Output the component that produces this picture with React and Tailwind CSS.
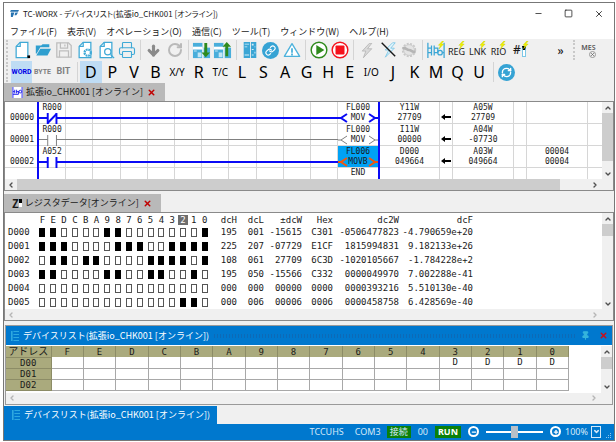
import { useState } from 'react'
import { ArrowDown, ChevronDown, ChevronLeft, ChevronRight, ChevronUp, Link, Minus, Pin, Plus, Printer, RefreshCw, RotateCw, Square, X } from 'lucide-react'
import clsx from 'clsx'

const MENUS = ['ファイル(F)', '表示(V)', 'オペレーション(O)', '通信(C)', 'ツール(T)', 'ウィンドウ(W)', 'ヘルプ(H)']

const DEVICES = ['D', 'P', 'V', 'B', 'X/Y', 'R', 'T/C', 'L', 'S', 'A', 'G', 'H', 'E', 'I/O', 'J', 'K', 'M', 'Q', 'U']

const RUNGS = [
  { no: '00000', contact: 'R000', kind: 'nc', on: true, fl: 'FL000', op: 'MOV', dst: ['Y11W', '27709'], src: ['A05W', '27709'] },
  { no: '00001', contact: 'R000', kind: 'no', on: false, fl: 'FL000', op: 'MOV', dst: ['I11W', '00000'], src: ['A04W', '-07730'] },
  { no: '00002', contact: 'A052', kind: 'no', on: true, selected: true, fl: 'FL006', op: 'MOVB', dst: ['D000', '049664'], src: ['A03W', '049664'], extra: ['00004', '00004'] },
]

const BITS = 'FEDCBA9876543210'.split('')

const REGISTERS = [
  { name: 'D000', bits: '1100001100000001', dcH: '195', dcL: '001', dcW: '-15615', hex: 'C301', dc2W: '-0506477823', dcF: '-4.790659e+20' },
  { name: 'D001', bits: '1110000111001111', dcH: '225', dcL: '207', dcW: '-07729', hex: 'E1CF', dc2W: '1815994831', dcF: '9.182133e+26' },
  { name: 'D002', bits: '0110110000111101', dcH: '108', dcL: '061', dcW: '27709', hex: '6C3D', dc2W: '-1020105667', dcF: '-1.784228e+2' },
  { name: 'D003', bits: '1100001100110010', dcH: '195', dcL: '050', dcW: '-15566', hex: 'C332', dc2W: '0000049970', dcF: '7.002288e-41' },
  { name: 'D004', bits: '0000000000000000', dcH: '000', dcL: '000', dcW: '00000', hex: '0000', dc2W: '0000393216', dcF: '5.510130e-40' },
  { name: 'D005', bits: '0000000000000110', dcH: '000', dcL: '006', dcW: '00006', hex: '0006', dc2W: '0000458758', dcF: '6.428569e-40' },
]

const DEVICE_ROWS = [
  { name: 'D00', used: ['3', '2', '1', '0'] },
  { name: 'D01', used: [] },
  { name: 'D02', used: [] },
]

function Bolt({ className, color = '#f2f200', edge = '#b5c400' }) {
  return (
    <svg viewBox="0 0 10 12" className={className}>
      <path d="M7 0 1 6.5h3L2 12l7-7.5H5.5L9 0z" fill={color} stroke={edge} strokeWidth=".5" />
    </svg>
  )
}

function PageIcon({ children }) {
  return (
    <svg viewBox="0 0 20 20" className="size-[18px]" fill="none" stroke="#3fa9d6" strokeWidth="1.4">
      <path d="M8 1.5h8.5v17h-13V6z" fill="#fff" />
      <path d="M8 1.5V6H3.5" />
      {children}
    </svg>
  )
}

function OpenIcon() {
  return (
    <svg viewBox="0 0 20 20" className="size-[18px]" fill="#2f9fcf">
      <path d="M2 5h6l1.5-1.5H17V7H7l-4 7H2z" />
      <path d="M7 8.5h12L15 16H2.5z" />
    </svg>
  )
}

function SaveIcon() {
  return (
    <svg viewBox="0 0 20 20" className="size-[18px]" fill="none" stroke="#bdbdbd" strokeWidth="1.4">
      <path d="M2 2h13l3 3v13H2z" />
      <path d="M6 2v6h8V2M5 18v-7h10v7M11 4v2" />
    </svg>
  )
}

function RackIcon({ up }) {
  return (
    <svg viewBox="0 0 20 20" className="size-[19px]">
      <path d="M1 2h10v16H1z" fill="#49aedb" />
      <path d="M1 6h10v3H1z" fill="#fff" />
      <path d="M2 10h3v1H2zM6 12h4v5H6z" fill="#c3e6f5" />
      <path d="M12 7h7v11h-7z" fill="#49aedb" />
      <path d="M11 7h1v11h-1z" fill="#fff" />
      <path
        d={up ? 'M13 16V6h-3l4.500-5L19 6h-3v10z' : 'M13 2v10h-3l4.500 5 4.500-5h-3V2z'}
        fill="#2f8a1c"
      />
    </svg>
  )
}

function UnitIcon() {
  return (
    <svg viewBox="0 0 20 20" className="size-[18px]">
      <path d="M3 1h7v18H3zM11 1h6v18h-6z" fill="#3ba6d5" />
      <path d="M4 3h5v1H4zM4 6h3v1H4zM4 15h5v1H4zM12 3h2v2h-2zM15 6h1v1h-1zM12 9h2v1h-2zM15 12h1v2h-1zM12 15h2v1h-2z" fill="#d8f0fa" />
    </svg>
  )
}

function WarnIcon() {
  return (
    <svg viewBox="0 0 20 20" className="size-[18px]" fill="none" stroke="#4db2dc" strokeWidth="1.5" strokeLinejoin="round">
      <path d="M10 3 18.500 17h-17z" fill="#fff" />
      <path d="M10 8v5M10 14v2" strokeWidth="2" />
    </svg>
  )
}

function PlayIcon() {
  return (
    <svg viewBox="0 0 20 20" className="size-[18px]">
      <circle cx="10" cy="10" r="8.7" fill="#fff" stroke="#2f8a1c" strokeWidth="1.6" />
      <path d="M7 4.500 16 10l-9 5.500z" fill="#2f8a1c" />
    </svg>
  )
}

function StopIcon() {
  return (
    <svg viewBox="0 0 20 20" className="size-[18px]">
      <circle cx="10" cy="10" r="8.7" fill="#fff" stroke="#f5121c" strokeWidth="1.6" />
      <rect x="5" y="5" width="10" height="10" rx="1" fill="#f5121c" />
    </svg>
  )
}

function BoltOffIcon() {
  return (
    <svg viewBox="0 0 20 20" className="size-[18px]">
      <path d="M15 2 7 10h4l-4 8 10-10h-4l5-6z" fill="#e4f5fc" stroke="#7cc7e6" />
      <path d="M3 2 18 17" stroke="#1a1a1a" strokeWidth="1.6" />
    </svg>
  )
}

function GearOffIcon() {
  return (
    <svg viewBox="0 0 20 20" className="size-[18px]" fill="none" stroke="#c8c8c8">
      <circle cx="10" cy="10" r="7" strokeWidth="2" strokeDasharray="2.200 1.500" />
      <circle cx="10" cy="10" r="6" fill="#e4e4e4" />
      <path d="M3 8c4-1 4 2 7 2s4 3 7 2" stroke="#b5b5b5" strokeWidth="3" />
    </svg>
  )
}

function LadderIcon() {
  return (
    <span className="relative block size-[18px]">
      <svg viewBox="0 0 20 20" className="size-[18px]" fill="none" stroke="#3ba6d5" strokeWidth="1.4">
        <path d="M1 2v17M19 2v17M1 8h4M5 5v6M8 5v6M8 8h4v5M1 13h4M5 11v5M8 11v5M8 13h4M17 13h2" />
        <circle cx="14.500" cy="13" r="2.500" />
      </svg>
      <Bolt className="absolute top-0 right-0 h-2 w-2" />
    </span>
  )
}

function TextIcon({ children }) {
  return (
    <span className="relative block pt-1 font-['Noto_Sans',sans-serif] text-[9px] leading-3">
      {children}
      <Bolt className="absolute -top-px right-0 h-2 w-[7px]" />
    </span>
  )
}

function ToolButton({ label, className, children }) {
  return (
    <button aria-label={label} className={clsx('flex h-[22px] w-[21px] shrink-0 items-center justify-center', className)}>
      {children}
    </button>
  )
}

const Sep = () => <span className="mx-[2px] h-5 w-px shrink-0 border-r border-[#d4d4d4] pr-px" />

const Grip = () => <span className="mx-[2px] h-5 w-[3px] shrink-0 border-l-2 border-dotted border-[#c9c9c9]" />

function DocTab({ icon, children }) {
  return (
    <div className="flex h-[18px] bg-[#f0f0f0]">
      <div className="flex items-center bg-[#b9b9b9] pr-[9px] pl-2 text-[9px] leading-4">
        {icon}
        <span className="whitespace-nowrap">{children}</span>
        <button aria-label="閉じる" className="ml-1 text-[#c00000]"><X size={9} strokeWidth={4} /></button>
      </div>
    </div>
  )
}

function VScroll({ thumb }) {
  return (
    <div className="flex w-[11px] shrink-0 flex-col items-center bg-[#f0f0f0] text-[#505050]">
      <button aria-label="上へ" className="flex h-[11px] items-center"><ChevronUp size={8} strokeWidth={4} /></button>
      <div className={clsx('w-full bg-[#cdcdcd]', thumb)} />
      <button aria-label="下へ" className="mt-auto flex h-[11px] items-center"><ChevronDown size={8} strokeWidth={4} /></button>
    </div>
  )
}

function HScroll({ thumb, faded }) {
  return (
    <div className={clsx('flex h-[11px] items-center bg-[#f0f0f0] pr-3', faded ? 'text-[#b5b5b5]' : 'text-[#505050]')}>
      <button aria-label="左へ" className="flex w-3 justify-center"><ChevronLeft size={8} strokeWidth={4} /></button>
      <div className="h-full flex-1">
        {thumb && <div className="h-full w-[95%] bg-[#cdcdcd]" />}
      </div>
      <button aria-label="右へ" className="flex w-3 justify-center"><ChevronRight size={8} strokeWidth={4} /></button>
    </div>
  )
}

function Contact({ rung }) {
  const color = rung.on ? '#0a0af5' : '#808080'
  return (
    <svg viewBox="0 0 27 11" preserveAspectRatio="none" className="h-[11px] w-full" fill="none" stroke={color} strokeWidth={rung.on ? 2 : 1}>
      <path d={rung.on ? 'M0 5h9M9 0v11M18 0v11M18 5h9' : 'M0 4.500h9M9 0v11M18 0v11M18 4.500h9'} />
      {rung.kind === 'nc' && <path d="M9 10 18 1" />}
    </svg>
  )
}

function Coil({ rung }) {
  const color = rung.selected ? '#f0560f' : rung.on ? '#0a0af5' : '#808080'
  return (
    <svg viewBox="0 0 40 10" className="absolute inset-x-0 top-[11px] h-[10px] w-full" fill="none" stroke={color} strokeWidth={rung.on ? 2 : 1}>
      <path d="M0 5h3M9 1 3 5l6 4M31 1l6 4-6 4M37 5h3" />
    </svg>
  )
}

function Operand({ value = [], className }) {
  return (
    <div className={clsx('shrink-0 border-r border-b border-[#d6d6d6] pt-px text-center', className)}>
      {value.map((v, i) => <div key={i}>{v}</div>)}
    </div>
  )
}

function Arrow() {
  return (
    <svg viewBox="0 0 10 6" className="mx-auto mt-3 h-[6px] w-[10px]">
      <path d="M0 3 4 0v2h6v2H4v2z" />
    </svg>
  )
}

function Rung({ rung }) {
  return (
    <div className="flex h-[22px]">
      <div className="w-8 shrink-0 border-b border-[#d6d6d6] pt-[11px] text-right">
        <span className="pr-[3px]">{rung.no}</span>
      </div>
      <div className="w-[2px] shrink-0 bg-[#0a0af5]" />
      <div className="relative flex min-w-0 flex-1">
        <div className="flex-1 border-r border-b border-[#d6d6d6] pt-px text-center">
          <div>{rung.contact}</div>
          <Contact rung={rung} />
        </div>
        {Array.from({ length: 10 }, (_, i) => (
          <div key={i} className="relative flex-1 border-r border-b border-[#d6d6d6]">
            <div className={clsx('absolute top-[15px] -right-px -left-px', rung.on ? 'h-[2px] bg-[#0a0af5]' : 'h-px bg-[#808080]')} />
          </div>
        ))}
      </div>
      <div className={clsx('relative w-10 shrink-0 border-b border-[#d6d6d6] pt-px text-center', rung.selected && 'bg-[#00a2f5]')}>
        <div>{rung.fl}</div>
        <Coil rung={rung} />
        <div className="relative">{rung.op}</div>
      </div>
      <div className="w-[2px] shrink-0 bg-[#0a0af5]" />
      <Operand value={rung.dst} className="w-[60px]" />
      <div className="w-[13px] shrink-0 border-r border-b border-[#d6d6d6]"><Arrow /></div>
      <Operand value={rung.src} className="w-[61px]" />
      <Operand className="w-[13px]" />
      <Operand value={rung.extra} className="w-[61px]" />
      <div className="w-[14px] shrink-0 border-b border-[#d6d6d6]" />
    </div>
  )
}

function LadderPanel() {
  return (
    <section className="border border-[#8a8a8a] bg-white">
      <div className="flex">
        <div className="min-w-0 flex-1 font-['DejaVu_Sans_Mono',monospace] text-[8px] leading-[10px]">
          {RUNGS.map((r) => <Rung key={r.no} rung={r} />)}
          <div className="flex h-[11px]">
            <div className="w-8 shrink-0" />
            <div className="w-[2px] shrink-0 bg-[#0a0af5]" />
            <div className="flex min-w-0 flex-1">
              {Array.from({ length: 11 }, (_, i) => <div key={i} className="flex-1 border-r border-[#d6d6d6]" />)}
            </div>
            <div className="w-10 shrink-0 text-center">END</div>
            <div className="w-[2px] shrink-0 bg-[#0a0af5]" />
            <div className="w-[60px] shrink-0 border-r border-[#d6d6d6]" />
            <div className="w-[13px] shrink-0 border-r border-[#d6d6d6]" />
            <div className="w-[61px] shrink-0 border-r border-[#d6d6d6]" />
            <div className="w-[13px] shrink-0 border-r border-[#d6d6d6]" />
            <div className="w-[61px] shrink-0 border-r border-[#d6d6d6]" />
            <div className="w-[14px] shrink-0" />
          </div>
        </div>
        <VScroll thumb="h-12" />
      </div>
      <HScroll thumb />
    </section>
  )
}

function RegisterPanel() {
  return (
    <section className="border border-[#8a8a8a] bg-white">
      <div className="flex">
        <div className="min-w-0 flex-1">
          <table className="table-fixed text-right font-['DejaVu_Sans_Mono',monospace] text-[9px] leading-[14px]">
            <colgroup>
              <col className="w-8" />
              <col className="w-[173px]" />
              <col className="w-[27px]" />
              <col className="w-[27px]" />
              <col className="w-[38px]" />
              <col className="w-[31px]" />
              <col className="w-[66px]" />
              <col className="w-[74px]" />
            </colgroup>
            <thead>
              <tr className="h-3 leading-[10px]">
                <th />
                <th className="pt-[2px] font-normal">
                  <div className="flex text-center">
                    {BITS.map((b) => (
                      <span key={b} className={clsx('flex-1', b === '2' && 'bg-[#6e6e6e] text-white')}>{b}</span>
                    ))}
                  </div>
                </th>
                {['dcH', 'dcL', '±dcW', 'Hex', 'dc2W', 'dcF'].map((h) => (
                  <th key={h} className="pt-[2px] font-normal">{h}</th>
                ))}
              </tr>
            </thead>
            <tbody>
              {REGISTERS.map((r) => (
                <tr key={r.name} className="h-[14px]">
                  <td className="pl-[3px] text-left">{r.name}</td>
                  <td>
                    <div className="flex">
                      {r.bits.split('').map((bit, i) => (
                        <span key={i} className="flex flex-1 justify-center">
                          <span className={clsx('h-[9px] w-[6px] border', bit === '1' ? 'border-black bg-black' : 'border-[#555]')} />
                        </span>
                      ))}
                    </div>
                  </td>
                  <td>{r.dcH}</td>
                  <td>{r.dcL}</td>
                  <td>{r.dcW}</td>
                  <td>{r.hex}</td>
                  <td>{r.dc2W}</td>
                  <td>{r.dcF}</td>
                </tr>
              ))}
            </tbody>
          </table>
        </div>
        <VScroll thumb="h-3" />
      </div>
      <HScroll faded />
    </section>
  )
}

function ListIcon() {
  return (
    <svg viewBox="0 0 10 10" className="h-[10px] w-2 shrink-0" preserveAspectRatio="none">
      <path d="M0 0h2v10H0zM3 0h7v1H3zM3 3h7v1H3zM3 6h7v1H3zM3 9h7v1H3z" fill="#2ea8e0" />
    </svg>
  )
}

function DevicePanel() {
  return (
    <section className="mx-px border border-[#9a9a9a] bg-white">
      <header className="flex h-[19px] items-center gap-1 bg-[#0078ce] pr-1 pl-[5px] text-[9px] leading-4 text-white">
        <ListIcon />
        <h2 className="whitespace-nowrap">デバイスリスト(拡張io_CHK001 [オンライン])</h2>
        <div className="h-1 flex-1 bg-[radial-gradient(#1560a8_1px,transparent_1px)] bg-[length:3px_2px] opacity-60" />
        <button aria-label="固定" className="mr-[5px] text-[#35b4dc]"><Pin size={9} strokeWidth={3} fill="currentColor" /></button>
        <button aria-label="閉じる" className="text-[#c8101c]"><X size={9} strokeWidth={4} /></button>
      </header>
      <div className="flex pt-px">
        <div className="min-w-0 flex-1 pr-8 pb-[2px]">
          <table className="w-full table-fixed border-collapse text-center font-['DejaVu_Sans_Mono',monospace] text-[9px] leading-[10px]">
            <thead>
              <tr className="h-[11px]">
                <th className="w-[45px] border-r border-b border-[#8c8c66] bg-[#aaaa7d] p-0 font-['Noto_Sans_CJK_JP',sans-serif] text-[10px] font-normal">アドレス</th>
                {BITS.map((b) => (
                  <th key={b} className="border-r border-[#8c8c66] bg-[#aaaa7d] p-0 font-normal">{b}</th>
                ))}
              </tr>
            </thead>
            <tbody>
              {DEVICE_ROWS.map((row) => (
                <tr key={row.name} className="h-[11px]">
                  <th className="border-r border-b border-[#8c8c66] bg-[#aaaa7d] p-0 font-normal">{row.name}</th>
                  {BITS.map((b) => (
                    <td key={b} className="border-r border-b border-[#a8a8a8] p-0">{row.used.includes(b) && 'D'}</td>
                  ))}
                </tr>
              ))}
            </tbody>
          </table>
        </div>
        <VScroll thumb="h-3" />
      </div>
      <HScroll faded />
    </section>
  )
}

function StatusBar() {
  const [zoom, setZoom] = useState(50)

  return (
    <footer className="flex h-4 items-center justify-end bg-[#0078ce] pr-[2px] font-['Noto_Sans',sans-serif] text-[9px] leading-3 text-[#d5e9f8]">
      <span>TCCUHS</span>
      <span className="ml-[11px]">COM3</span>
      <span className="ml-[6px] bg-[#0a800a] px-[3px] font-['Noto_Sans_CJK_JP',sans-serif]">接続</span>
      <span className="ml-[7px]">00</span>
      <span className="ml-[7px] bg-[#0a800a] px-[3px] font-bold text-white">RUN</span>
      <button aria-label="縮小" className="ml-[7px] flex size-[11px] items-center justify-center rounded-full border-2 border-white text-white">
        <Minus size={6} strokeWidth={5} />
      </button>
      <input
        type="range"
        aria-label="ズーム"
        value={zoom}
        onChange={(e) => setZoom(e.target.value)}
        className="mx-[7px] h-3 w-[57px] appearance-none bg-transparent [&::-webkit-slider-runnable-track]:h-[2px] [&::-webkit-slider-runnable-track]:bg-white [&::-webkit-slider-thumb]:-mt-[5px] [&::-webkit-slider-thumb]:h-3 [&::-webkit-slider-thumb]:w-[7px] [&::-webkit-slider-thumb]:appearance-none [&::-webkit-slider-thumb]:bg-[#b9c0c8]"
      />
      <button aria-label="拡大" className="flex size-[11px] items-center justify-center rounded-full border-2 border-white text-white">
        <Plus size={6} strokeWidth={5} />
      </button>
      <div className="relative ml-1 flex items-center">
        <select aria-label="倍率" className="w-9 appearance-none bg-transparent leading-3 outline-none">
          <option>100%</option>
        </select>
        <span className="pointer-events-none absolute right-0 flex h-3 w-[10px] items-center justify-center border border-[#d5e9f8]">
          <ChevronDown size={7} strokeWidth={5} />
        </span>
      </div>
      <svg viewBox="0 0 7 7" className="ml-1 size-[7px] self-end" fill="#8cc4ec">
        <path d="M5 0h1v1H5zM3 2h1v1H3zM5 2h1v1H5zM1 4h1v1H1zM3 4h1v1H3zM5 4h1v1H5z" />
      </svg>
    </footer>
  )
}

export default function App() {
  const [device, setDevice] = useState('D')

  return (
    <div className="bg-white pt-[2px] pr-px pl-[3px] font-['Noto_Sans_CJK_JP',sans-serif] text-[#1a1a1a]">
      <div className="border border-[#777] bg-[#f0f0f0]">
        {/* Title bar */}
        <header className="flex h-[21px] items-center bg-white pr-[10px] pl-[6px]">
          <svg viewBox="0 0 10 10" className="mr-1 size-[9px]" fill="#2572b0">
            <path d="M1 1h9L9 3H0zM1 4h4L3 9H1zM6 4h3L7 7H5z" />
          </svg>
          <h1 className="text-[8px] leading-4 whitespace-nowrap [font-feature-settings:'palt']">TC-WORX - デバイスリスト(拡張io_CHK001 [オンライン])</h1>
          <div className="ml-auto flex items-center gap-[21px]">
            <button aria-label="最小化"><Minus size={9} /></button>
            <button aria-label="最大化"><Square size={9} /></button>
            <button aria-label="閉じる"><X size={10} /></button>
          </div>
        </header>

        <nav className="flex h-[15px] items-center gap-[10px] bg-white pl-[6px] text-[9px] leading-3">
          {MENUS.map((m) => (
            <button key={m} className="whitespace-nowrap">{m}</button>
          ))}
        </nav>

        {/* Main toolbar */}
        <div className="flex h-[22px] items-center">
          <Grip />
          <ToolButton label="新規">
            <PageIcon><path d="M16 16h3v3h-3z" fill="#000" stroke="none" /></PageIcon>
          </ToolButton>
          <ToolButton label="開く"><OpenIcon /></ToolButton>
          <ToolButton label="保存"><SaveIcon /></ToolButton>
          <ToolButton label="ページ設定">
            <PageIcon><circle cx="13" cy="13" r="3.5" fill="#fff" strokeWidth="2.5" strokeDasharray="2 .8" /></PageIcon>
          </ToolButton>
          <ToolButton label="印刷プレビュー">
            <PageIcon><circle cx="12" cy="12" r="3.5" fill="#fff" /><path d="m15 15 4 4" /></PageIcon>
          </ToolButton>
          <ToolButton label="印刷"><Printer size={18} strokeWidth={1.5} color="#3fa9d6" /></ToolButton>
          <Sep />
          <ToolButton label="下へ"><ArrowDown size={15} strokeWidth={5} color="#8a8a8a" /></ToolButton>
          <ToolButton label="更新"><RotateCw size={16} strokeWidth={3} color="#b9b9b9" /></ToolButton>
          <Sep />
          <ToolButton label="ダウンロード"><RackIcon /></ToolButton>
          <ToolButton label="アップロード"><RackIcon up /></ToolButton>
          <Sep />
          <ToolButton label="ユニット"><UnitIcon /></ToolButton>
          <ToolButton label="接続">
            <span className="flex size-[17px] items-center justify-center rounded-full bg-[#36a3d4] text-white">
              <Link size={11} strokeWidth={2.5} />
            </span>
          </ToolButton>
          <ToolButton label="警告"><WarnIcon /></ToolButton>
          <Sep />
          <ToolButton label="運転"><PlayIcon /></ToolButton>
          <ToolButton label="停止"><StopIcon /></ToolButton>
          <Sep />
          <ToolButton label="オンライン"><Bolt className="h-[15px] w-3" color="#d9d9d9" edge="#a5a5a5" /></ToolButton>
          <ToolButton label="オフライン"><BoltOffIcon /></ToolButton>
          <ToolButton label="設定"><GearOffIcon /></ToolButton>
          <Sep />
          <ToolButton label="ラダー"><LadderIcon /></ToolButton>
          <ToolButton><TextIcon>REG</TextIcon></ToolButton>
          <ToolButton><TextIcon>LNK</TextIcon></ToolButton>
          <ToolButton><TextIcon>RIO</TextIcon></ToolButton>
          <ToolButton label="デバイス値">
            <span className="relative pr-[5px] font-['Noto_Sans',sans-serif] text-[12px] leading-4 font-medium">
              #
              <span className="absolute right-0 bottom-px h-[11px] w-1 border border-t-4 border-[#7cc7e6] border-t-black bg-white" />
              <Bolt className="absolute -top-px -right-[3px] h-2 w-[7px]" />
            </span>
          </ToolButton>
          <ToolButton label="その他" className="ml-5"><span className="text-[12px] font-bold">»</span></ToolButton>
          <Grip />
          <ToolButton label="メッセージ">
            <span className="relative pb-1 font-['Noto_Sans',sans-serif] text-[7px] leading-3 font-semibold text-[#555]">
              MES
              <span className="absolute right-0 bottom-0 flex size-[7px] items-center justify-center rounded-full border border-[#999] bg-[#f0f0f0]">
                <X size={5} strokeWidth={3} />
              </span>
            </span>
          </ToolButton>
        </div>

        {/* Device toolbar */}
        <div className="flex h-[22px] items-center font-['Roboto',sans-serif] text-[7px] font-bold text-[#808080]">
          <Grip />
          <ToolButton className="bg-[#bfdcf4] text-[#0000e6]">WORD</ToolButton>
          <ToolButton>BYTE</ToolButton>
          <ToolButton className="text-[9px]">BIT</ToolButton>
          <Sep />
          <div className="flex w-[410px] font-['Noto_Sans',sans-serif] font-normal text-black">
            {DEVICES.map((d) => (
              <button
                key={d}
                onClick={() => setDevice(d)}
                className={clsx(
                  'flex h-[22px] flex-1 basis-0 items-center justify-center',
                  d.length > 1 ? 'text-[10px]' : 'text-[16px]',
                  d === device && 'bg-[#bfdcf4]'
                )}
              >
                {d}
              </button>
            ))}
          </div>
          <Sep />
          <ToolButton label="再読込">
            <span className="flex size-[17px] items-center justify-center rounded-full bg-[#36a3d4] text-white">
              <RefreshCw size={11} strokeWidth={3} />
            </span>
          </ToolButton>
        </div>

        <DocTab
          icon={
            <svg viewBox="0 0 12 12" className="mr-[3px] size-[11px]" fill="none" stroke="#1a1af0">
              <path d="M0 0h12v12H0z" fill="#fff" stroke="none" />
              <path d="M1 0v12M11 0v12M1 5h2M3 3v4M5 3v4M5 5h3M1 8h6V5" />
              <circle cx="9" cy="5" r="1.5" />
            </svg>
          }
        >
          拡張io_CHK001 [オンライン]
        </DocTab>
        <LadderPanel />

        <div className="h-[3px]" />
        <DocTab
          icon={
            <span className="mr-[3px] flex text-[11px] font-bold">
              Z<span className="mt-1 h-2 w-[3px] border-t-4 border-black bg-white" />
            </span>
          }
        >
          レジスタデータ[オンライン]
        </DocTab>
        <RegisterPanel />

        <div className="h-1" />
        <DevicePanel />

        {/* Docked window tabs */}
        <div className="flex bg-[#f0f0f0] pt-px">
          <button className="flex h-[18px] items-center gap-1 bg-[#0078ce] pr-[7px] pl-2 text-[9px] whitespace-nowrap text-white">
            <ListIcon />
            デバイスリスト(拡張io_CHK001 [オンライン])
          </button>
        </div>
        <StatusBar />
      </div>
    </div>
  )
}
